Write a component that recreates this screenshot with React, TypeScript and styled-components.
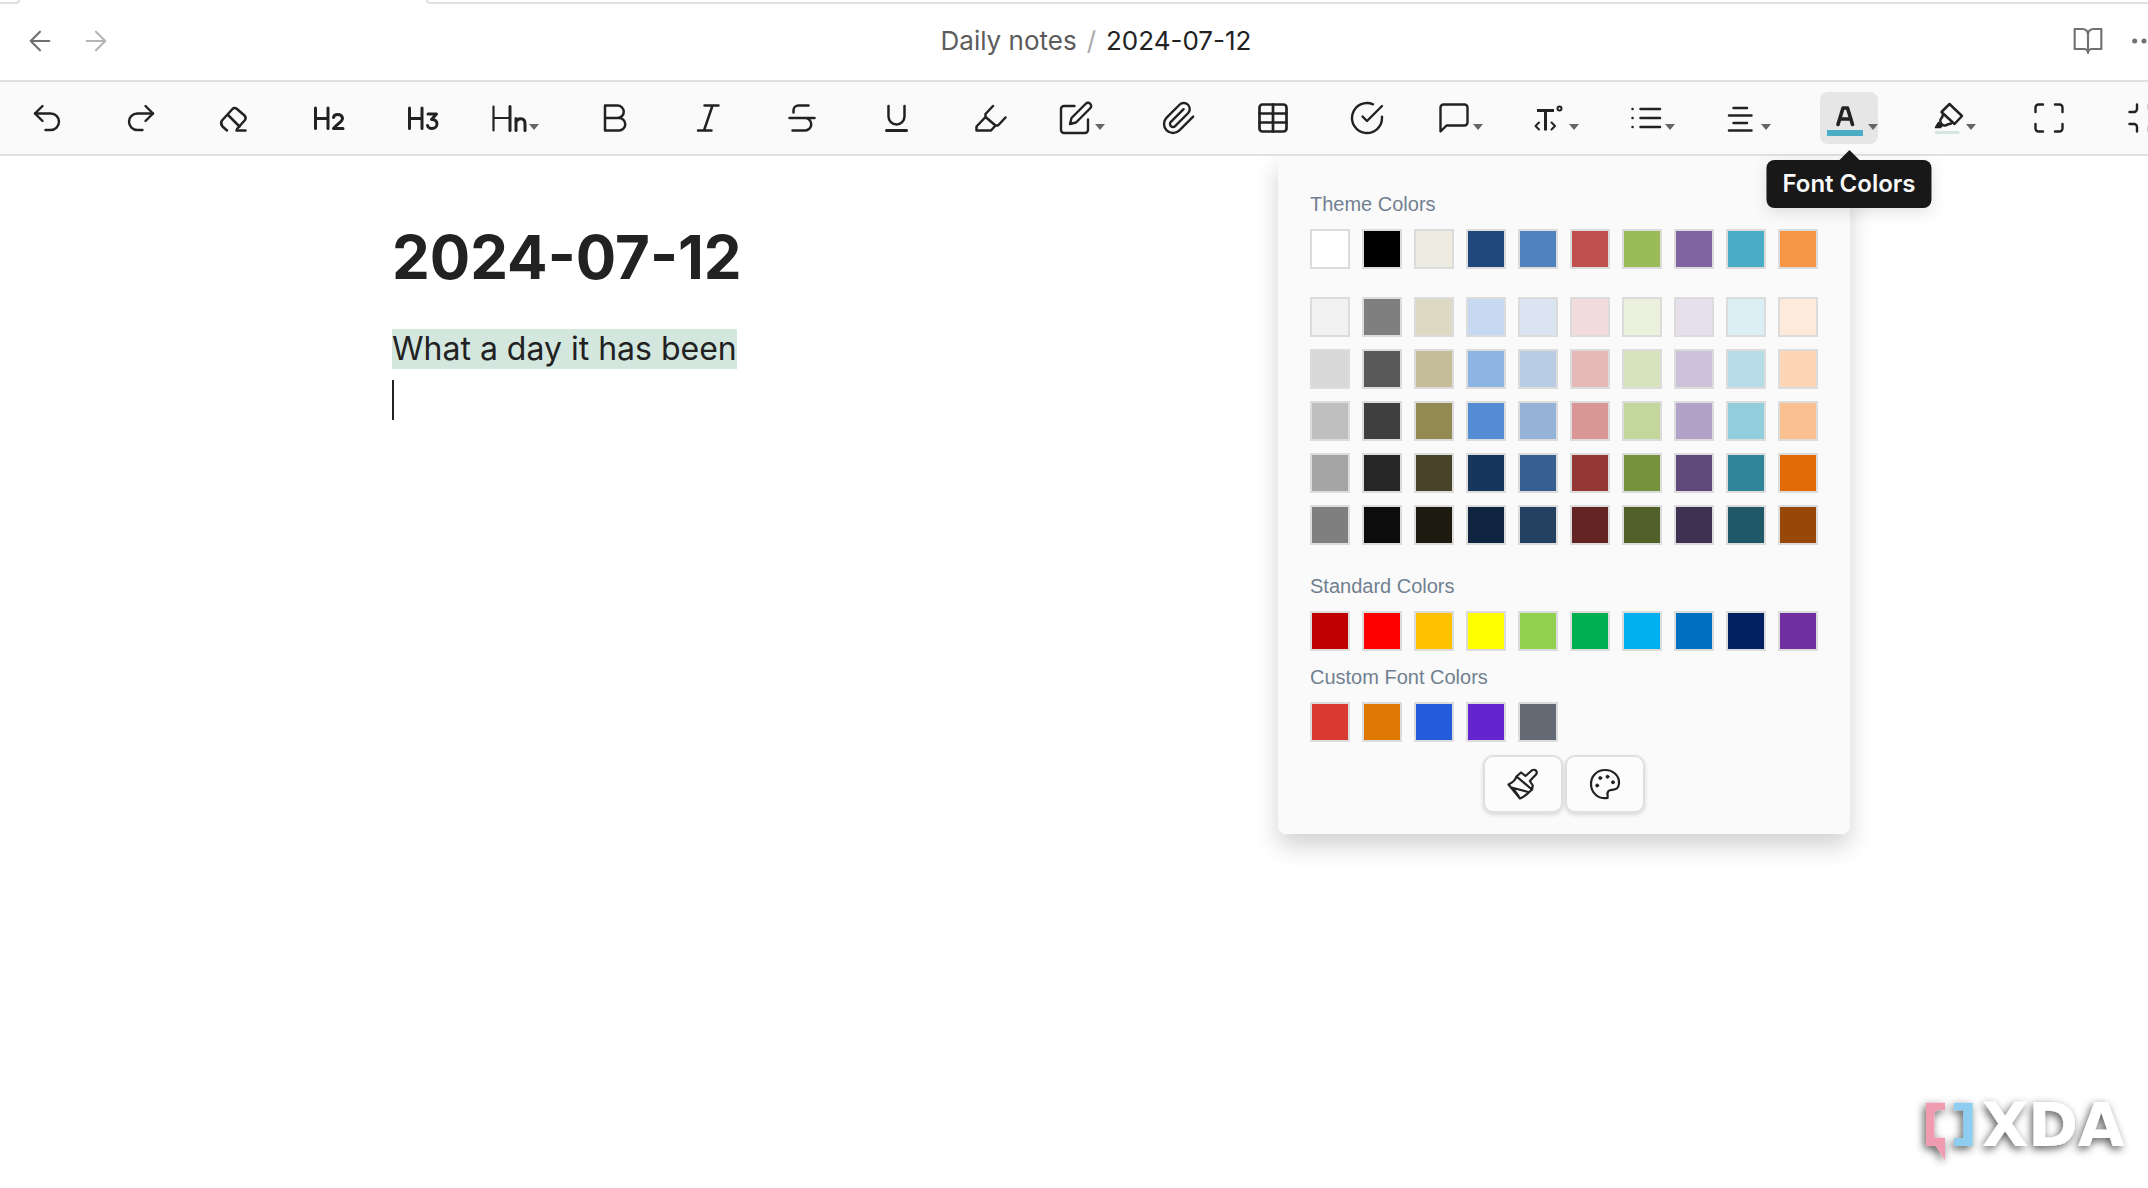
import React from 'react';
import styled, { createGlobalStyle } from 'styled-components';

const GlobalStyle = createGlobalStyle`
  * { box-sizing: border-box; }
  body {
    margin: 0;
    background: #ffffff;
    color: #222222;
    font-family: Inter, "Noto Sans", sans-serif;
    overflow-x: hidden;
  }
  button { font: inherit; color: inherit; }
`;

const Page = styled.div`
  display: flex;
  flex-direction: column;
  min-height: 100vh;
  overflow: hidden;
`;

const TabStrip = styled.div`
  display: flex;
  justify-content: space-between;
  height: 4px;
`;

const TabEdge = styled.div<{ $side: 'left' | 'right' }>`
  border-bottom: 2px solid #e0e0e0;
  ${(p) =>
    p.$side === 'left'
      ? 'width: 20px; border-right: 2px solid #e0e0e0; border-bottom-right-radius: 8px;'
      : 'flex: 1; margin-left: 406px; border-left: 2px solid #e0e0e0; border-bottom-left-radius: 8px;'}
`;

const Header = styled.header`
  display: flex;
  align-items: center;
  height: 76px;
  margin-right: -12px;
  padding-bottom: 2px;
`;

const HeaderGroup = styled.div<{ $pad?: string }>`
  display: flex;
  gap: 24px;
  padding: ${(p) => p.$pad ?? '0'};
`;

const HeaderButton = styled.button<{ $faint?: boolean }>`
  display: flex;
  padding: 0;
  border: 0;
  background: none;
  color: ${(p) => (p.$faint ? '#b5b5b5' : '#707070')};
`;

const Breadcrumb = styled.nav`
  display: flex;
  flex: 1;
  justify-content: center;
  gap: 10px;
  font-size: 26px;
  line-height: 32px;
`;

const CrumbLink = styled.a`
  color: #5c5c5c;
  text-decoration: none;
`;

const CrumbSlash = styled.span`
  color: #ababab;
`;

const Toolbar = styled.div`
  display: flex;
  align-items: center;
  gap: 40px;
  height: 76px;
  padding-left: 20px;
  border-top: 2px solid #e0e0e0;
  border-bottom: 2px solid #e0e0e0;
  background: #fafafa;
`;

type ToolKind = 'plain' | 'menu' | 'color';

const toolWidth: Record<ToolKind, number> = { plain: 54, menu: 56, color: 58 };

const ToolButton = styled.button<{ $kind: ToolKind; $active?: boolean }>`
  display: flex;
  flex: none;
  align-items: center;
  justify-content: ${(p) => (p.$kind === 'plain' ? 'center' : 'flex-start')};
  gap: ${(p) => (p.$active ? '5px' : '1px')};
  width: ${(p) => toolWidth[p.$kind]}px;
  height: 52px;
  padding: 0 0 0 ${(p) => ({ plain: 0, menu: 2, color: 7 })[p.$kind]}px;
  border: 0;
  border-radius: 8px;
  background: ${(p) => (p.$active ? '#e6e6e6' : 'transparent')};
`;

const ToolSlot = styled.div<{ $kind: ToolKind }>`
  position: relative;
  flex: none;
  margin: 0 ${(p) => (p.$kind === 'color' ? 2 : 0)}px;
`;

const Caret = styled.span`
  flex: none;
  margin-top: 17px;
  border: 5px solid transparent;
  border-top: 6px solid #666666;
  border-bottom: 0;
`;

const Tooltip = styled.div`
  position: absolute;
  z-index: 3;
  top: 68px;
  left: 50%;
  transform: translateX(-50%);
  padding: 9px 16px;
  border-radius: 8px;
  background: #181818;
  box-shadow: 0 4px 16px rgba(0, 0, 0, 0.12);
  color: #fafafa;
  font-size: 24px;
  font-weight: 600;
  line-height: 30px;
  white-space: nowrap;

  &::before {
    content: '';
    position: absolute;
    left: calc(50% - 10px);
    bottom: 100%;
    border: 10px solid transparent;
    border-top: 0;
    border-bottom-color: #181818;
  }
`;

const Picker = styled.div`
  position: absolute;
  z-index: 2;
  top: 64px;
  right: 28px;
  padding: 35px 32px 21px;
  border-radius: 0 0 8px 8px;
  background: #fafafa;
  box-shadow: 0 12px 24px rgba(0, 0, 0, 0.18);
  clip-path: inset(0 -48px -48px -48px);
`;

const PickerLabel = styled.div`
  margin-bottom: 12px;
  color: #708090;
  font-family: "Liberation Sans", Arial, sans-serif;
  font-size: 20px;
  line-height: 26px;
`;

const SwatchGrid = styled.div<{ $after?: number }>`
  display: grid;
  grid-template-columns: repeat(10, 40px);
  gap: 12px;
  margin-bottom: ${(p) => p.$after ?? 12}px;
`;

const Swatch = styled.button<{ $color: string }>`
  height: 40px;
  padding: 0;
  border: 2px solid #dcdcdc;
  background: ${(p) => p.$color};
`;

const PickerActions = styled.div`
  display: flex;
  justify-content: center;
  gap: 2px;
`;

const PickerAction = styled.button`
  display: flex;
  align-items: center;
  justify-content: center;
  width: 80px;
  height: 58px;
  padding: 0;
  border: 2px solid #e0e0e0;
  border-radius: 10px;
  background: #fcfcfc;
  box-shadow: 0 2px 4px rgba(0, 0, 0, 0.14);
`;

const Editor = styled.main`
  width: 100%;
  max-width: 1364px;
  margin: 0 auto;
  padding-top: 64px;
`;

const NoteTitle = styled.h1`
  margin: 0 0 29px;
  font-size: 60px;
  font-weight: 700;
  line-height: 74px;
`;

const Line = styled.p`
  display: flex;
  align-items: center;
  height: 51px;
  margin: 0;
  font-size: 32px;
  line-height: 51px;
`;

const Highlight = styled.mark`
  background: #d4e7df;
  color: inherit;
  line-height: 40px;
`;

const TextCursor = styled.span`
  width: 2px;
  height: 40px;
  background: #222222;
`;

const Watermark = styled.div`
  position: fixed;
  right: 8px;
  bottom: 18px;

  svg { display: block; }
`;

const WordmarkText = styled.text`
  font-family: "DejaVu Sans", sans-serif;
  font-size: 60px;
  font-weight: 700;
`;

/* Icons on a 24-unit grid */
const Feather = ({ children, size = 36, width = 1.6 }: { children: React.ReactNode; size?: number; width?: number }) => (
  <svg width={size} height={size} viewBox="0 0 24 24" fill="none" stroke="currentColor" strokeWidth={width} strokeLinecap="round" strokeLinejoin="round" aria-hidden="true">
    {children}
  </svg>
);

/* Icons on a 36-unit grid */
const Glyph = ({ children, width = 2.5, size = 36, grid = 36 }: { children: React.ReactNode; width?: number; size?: number; grid?: number }) => (
  <svg width={size} height={size} viewBox={`0 0 ${grid} ${grid}`} fill="none" stroke="currentColor" strokeWidth={width} strokeLinecap="round" strokeLinejoin="round" aria-hidden="true">
    {children}
  </svg>
);

interface Tool {
  name: string;
  kind: ToolKind;
  icon: React.ReactNode;
  active?: boolean;
}

const tools: Tool[] = [
  { name: 'Undo', kind: 'plain', icon: <Feather><path d="M9 14 4 9l5-5" /><path d="M4 9h10.5a5.5 5.5 0 0 1 0 11H11" /></Feather> },
  { name: 'Redo', kind: 'plain', icon: <Feather><path d="m15 14 5-5-5-5" /><path d="M20 9H9.500a5.500 5.500 0 0 0 0 11H13" /></Feather> },
  { name: 'Clear formatting', kind: 'plain', icon: <Glyph><path d="M10 30.500 5.500 26.500Q3 23.500 5 20.500L15.500 9Q17.500 7 20 9L27.500 15.500Q29.500 17.500 28 20L20 29" /><path d="M11.500 15.500 22.500 26.500M19.500 30.500h9" /></Glyph> },
  { name: 'Heading 2', kind: 'plain', icon: <Glyph width={3}><path d="M4.500 8v20.500M17 8v20.500M4.500 18.500H17" /><path d="M22.500 17.500c.5-4 8-4.500 9 .5.500 3.500-4.500 5-9 10.500h9.500" /></Glyph> },
  { name: 'Heading 3', kind: 'plain', icon: <Glyph width={3}><path d="M4.500 8v20.500M17 8v20.500M4.500 18.500H17" /><path d="M23 14h8.500l-5 5.500c7.500-.5 7 9 .5 9-2.500 0-4-1-4.500-3" /></Glyph> },
  { name: 'Headings', kind: 'menu', icon: <Glyph width={3}><path d="M1.500 6.500v24M1.500 18H18" strokeWidth="2.2" /><path d="M18 6.500v24M24 18.500v12M24 22.500c1-5 9-5.500 9 1v7" /></Glyph> },
  { name: 'Bold', kind: 'plain', icon: <Glyph><path d="M10 5.500v25h14a6.200 6.200 0 0 0 0-12.500H10M10 5.500h12.500a6.200 6.200 0 0 1 0 12.500" /></Glyph> },
  { name: 'Italic', kind: 'plain', icon: <Glyph><path d="M15.500 5.500h14M9 30.500h13.500M23.500 5.500 15 30.500" /></Glyph> },
  { name: 'Strikethrough', kind: 'plain', icon: <Glyph><path d="M10.500 12.500v-2a5 5 0 0 1 5-5h10M6.500 18h25M9.500 30.500H22a6.200 6.200 0 0 0 0-12.500" /></Glyph> },
  { name: 'Underline', kind: 'plain', icon: <Glyph><path d="M11.500 6v10.500a8 8 0 0 0 16 0V6" /><path d="M9.500 30.500h20" strokeWidth="3" /></Glyph> },
  { name: 'Highlight', kind: 'plain', icon: <Glyph><path d="M22 6l-7.500 8v3l-9 9.500v4h14.500l4.500-5L14.500 17M24.500 25.500h2.500l7.500-8" /></Glyph> },
  { name: 'Callout', kind: 'menu', icon: <Feather><path d="M11 4H4a2 2 0 0 0-2 2v14a2 2 0 0 0 2 2h14a2 2 0 0 0 2-2v-7" /><path d="M18.500 2.500a2.121 2.121 0 0 1 3 3L12 15l-4 1 1-4 9.500-9.500z" /></Feather> },
  { name: 'Attach file', kind: 'plain', icon: <Feather><path d="m21.440 11.050-9.190 9.190a6 6 0 0 1-8.490-8.490l8.570-8.570A4 4 0 1 1 18 8.840l-8.590 8.570a2 2 0 0 1-2.830-2.830l8.490-8.480" /></Feather> },
  { name: 'Table', kind: 'plain', icon: <Feather width={1.8}><rect x="3" y="3" width="18" height="18" rx="2" /><path d="M12 3v18M3 9h18M3 15h18" /></Feather> },
  { name: 'Task', kind: 'plain', icon: <Feather><path d="M22 11.080V12a10 10 0 1 1-5.930-9.140" /><path d="M22 4 12 14.010l-3-3" /></Feather> },
  { name: 'Comment', kind: 'menu', icon: <Feather><path d="M21 15a2 2 0 0 1-2 2H7l-4 4V5a2 2 0 0 1 2-2h14a2 2 0 0 1 2 2z" /></Feather> },
  { name: 'Text transform', kind: 'menu', icon: <Glyph width={2}><path d="M5 10.500h17M13.500 10.500v20" strokeWidth="3" strokeLinecap="butt" /><circle cx="27.500" cy="8.500" r="2" /><path d="M7 22.500l-3.500 3.500L7 29.500M19.500 22.500l3.500 3.500-3.500 3.500" /></Glyph> },
  { name: 'Lists', kind: 'menu', icon: <Glyph><path d="M12.500 9H32M12.500 18H32M12.500 27H32M4.500 9h.1M4.500 18h.1M4.500 27h.1" /></Glyph> },
  { name: 'Alignment', kind: 'menu', icon: <Glyph><path d="M9.500 8h13.500M5 15.500h22.500M9.500 23h13.500M5 30.500h22.500" /></Glyph> },
  {
    name: 'Font Colors',
    kind: 'color',
    active: true,
    icon: <Glyph width={3.6}><path d="M11 24.500 16 8h4.500l5 16.500M13 19h11" /><rect x="0" y="30" width="36" height="6" fill="#4bacc6" stroke="none" /></Glyph>,
  },
  {
    name: 'Background Colors',
    kind: 'color',
    icon: <Glyph><path d="M20.500 4 33 16 25.500 24 12.500 12z" /><path d="M14 14.500 13 17.500a4.200 4.200 0 1 0 5.500 7l3.500-1" /><path d="M9.500 22.500 6.500 27.500h5l2-2z" fill="currentColor" strokeWidth="1.5" /><path d="M7 32.500h22" stroke="#d4e7df" strokeWidth="3" /></Glyph>,
  },
  { name: 'Fullscreen', kind: 'plain', icon: <Feather><path d="M8 3H5a2 2 0 0 0-2 2v3M21 8V5a2 2 0 0 0-2-2h-3M3 16v3a2 2 0 0 0 2 2h3M16 21h3a2 2 0 0 0 2-2v-3" /></Feather> },
  { name: 'Focus mode', kind: 'plain', icon: <Feather><path d="M8 3v3a2 2 0 0 1-2 2H3M21 8h-3a2 2 0 0 1-2-2V3M3 16h3a2 2 0 0 1 2 2v3M16 21v-3a2 2 0 0 1 2-2h3" /></Feather> },
];

const themeBase = ['#ffffff', '#000000', '#eeece1', '#1f497d', '#4f81bd', '#c0504d', '#9bbb59', '#8064a2', '#4bacc6', '#f79646'];

const themeShades = [
  '#f2f2f2', '#7f7f7f', '#ddd9c3', '#c6d9f0', '#dbe5f1', '#f2dcdb', '#ebf1dd', '#e5e0ec', '#dbeef3', '#fdeada',
  '#d8d8d8', '#595959', '#c4bd97', '#8db3e2', '#b8cce4', '#e5b9b7', '#d7e3bc', '#ccc1d9', '#b7dde8', '#fbd5b5',
  '#bfbfbf', '#3f3f3f', '#938953', '#548dd4', '#95b3d7', '#d99694', '#c3d69b', '#b2a2c7', '#92cddc', '#fac08f',
  '#a5a5a5', '#262626', '#494429', '#17365d', '#366092', '#953734', '#76923c', '#5f497a', '#31859b', '#e36c09',
  '#7f7f7f', '#0c0c0c', '#1d1b10', '#0f243e', '#244061', '#632423', '#4f6128', '#3f3151', '#205867', '#974806',
];

const standardColors = ['#c00000', '#ff0000', '#ffc000', '#ffff00', '#92d050', '#00b050', '#00b0f0', '#0070c0', '#002060', '#7030a0'];

const customColors = ['#d83931', '#de7802', '#245bdb', '#6425d0', '#646a73'];

const Swatches = ({ colors, after }: { colors: string[]; after?: number }) => (
  <SwatchGrid $after={after}>
    {colors.map((color, i) => (
      <Swatch key={i} type="button" $color={color} aria-label={color} />
    ))}
  </SwatchGrid>
);

const ColorPicker = () => (
  <Picker>
    <PickerLabel>Theme Colors</PickerLabel>
    <Swatches colors={themeBase} after={28} />
    <Swatches colors={themeShades} after={28} />
    <PickerLabel>Standard Colors</PickerLabel>
    <Swatches colors={standardColors} after={13} />
    <PickerLabel>Custom Font Colors</PickerLabel>
    <Swatches colors={customColors} after={13} />
    <PickerActions>
      <PickerAction type="button" aria-label="Format brush">
        <Glyph size={34} grid={34} width={2.2}>
          <path d="M10.500 9.500 15 5.500l4.500 3.500L26 3.200c3.500-1.500 6 1.500 4 4.300L23.800 14l3 4.500-.8 4z" />
          <path d="M10.500 10C8.500 14 6 16 2.500 17.500L14 31.500c4-1.500 8-5 12-9M5.500 20.500 22 25M7 21.500l5.500 7.500" />
        </Glyph>
      </PickerAction>
      <PickerAction type="button" aria-label="Custom color">
        <Glyph size={34} grid={34} width={2.2}>
          <path d="M19.500 31C10 32.500 3 25.500 3 17 3 9 9 3 17 3s14.500 5.500 14 13.500c-.5 8.500-8 5-10.500 7.500-2.500 3 0 4.500-1 7z" />
          <g fill="currentColor" strokeWidth="1">
            <circle cx="12.300" cy="11" r="1.500" />
            <circle cx="19.500" cy="9.700" r="1.500" />
            <circle cx="25" cy="15.300" r="1.500" />
            <circle cx="9.200" cy="18.500" r="1.500" />
          </g>
        </Glyph>
      </PickerAction>
    </PickerActions>
  </Picker>
);

export default function App() {
  return (
    <Page>
      <GlobalStyle />
      <TabStrip>
        <TabEdge $side="left" />
        <TabEdge $side="right" />
      </TabStrip>
      <Header>
        <HeaderGroup $pad="0 8px 0 24px">
          <HeaderButton type="button" aria-label="Back">
            <Feather size={32}><path d="m12 19-7-7 7-7M19 12H5" /></Feather>
          </HeaderButton>
          <HeaderButton type="button" aria-label="Forward" $faint>
            <Feather size={32}><path d="M5 12h14M12 5l7 7-7 7" /></Feather>
          </HeaderButton>
        </HeaderGroup>
        <Breadcrumb aria-label="Note path">
          <CrumbLink href="#daily-notes">Daily notes</CrumbLink>
          <CrumbSlash>/</CrumbSlash>
          <span>2024-07-12</span>
        </Breadcrumb>
        <HeaderGroup>
          <HeaderButton type="button" aria-label="Reading view">
            <Feather size={32}><path d="M2 3h6a4 4 0 0 1 4 4v14a3 3 0 0 0-3-3H2zM22 3h-6a4 4 0 0 0-4 4v14a3 3 0 0 1 3-3h7z" /></Feather>
          </HeaderButton>
          <HeaderButton type="button" aria-label="More options">
            <Feather size={32}>
              <g fill="currentColor"><circle cx="5" cy="12" r="1.100" /><circle cx="12" cy="12" r="1.100" /><circle cx="19" cy="12" r="1.100" /></g>
            </Feather>
          </HeaderButton>
        </HeaderGroup>
      </Header>
      <Toolbar role="toolbar" aria-label="Formatting">
        {tools.map((tool) => (
          <ToolSlot key={tool.name} $kind={tool.kind}>
            <ToolButton type="button" aria-label={tool.name} $kind={tool.kind} $active={tool.active}>
              {tool.icon}
              {tool.kind !== 'plain' && <Caret />}
            </ToolButton>
            {tool.active && (
              <>
                <ColorPicker />
                <Tooltip role="tooltip">Font Colors</Tooltip>
              </>
            )}
          </ToolSlot>
        ))}
      </Toolbar>
      <Editor>
        <NoteTitle>2024-07-12</NoteTitle>
        <Line><Highlight>What a day it has been</Highlight></Line>
        <Line><TextCursor /></Line>
      </Editor>
      <Watermark>
        <svg width="230" height="80" viewBox="0 0 230 80" role="img" aria-label="XDA logo">
          <defs>
            <filter id="logo-shadow" x="-10%" y="-20%" width="120%" height="140%">
              <feDropShadow dx="-2" dy="3" stdDeviation="4" floodColor="#000000" floodOpacity="0.65" />
            </filter>
          </defs>
          <g filter="url(#logo-shadow)">
            <path d="M16 12.700h19v7.600h-4l-2-1.500-4.700 4v24.900H35V70l-9.300-14H16z" fill="#f19bb0" />
            <path d="M44 12.700h18.700V56H44v-8h9.300V20.300H44z" fill="#8ecdf0" />
            <WordmarkText x="72" y="56" fill="#ffffff">XDA</WordmarkText>
          </g>
        </svg>
      </Watermark>
    </Page>
  );
}
